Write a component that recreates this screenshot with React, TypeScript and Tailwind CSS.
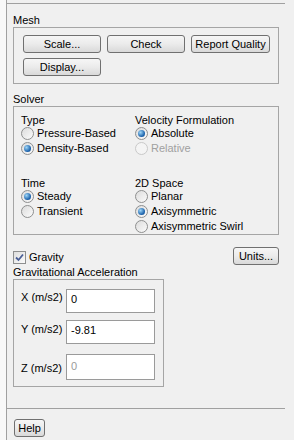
import React from 'react';

function Btn({ label, className }: { label: string; className?: string }) {
  return (
    <div
      className={
        'flex items-center justify-center rounded-[3px] border border-[#707070] bg-linear-to-b from-[#f6f6f6] via-[#ebebeb] to-[#d9d9d9] text-black ' +
        (className ?? '')
      }
    >
      {label}
    </div>
  );
}

function Radio({ label, checked, disabled }: { label: string; checked?: boolean; disabled?: boolean }) {
  return (
    <div className="flex h-[15px] items-center gap-[3px]">
      <span
        className={
          'flex h-[13px] w-[13px] items-center justify-center rounded-full border bg-linear-to-br ' +
          (disabled
            ? 'border-[#c9c9c9] from-[#f4f4f4] to-[#f4f4f4]'
            : 'border-[#8e8f8f] from-[#dcdcdc] to-[#fbfbfb]')
        }
      >
        {checked && (
          <span className="h-[7px] w-[7px] rounded-full bg-[radial-gradient(circle_at_35%_35%,#9fd6f7,#1d64ad_65%,#0c3f7a)]" />
        )}
      </span>
      <span className={disabled ? 'text-[#a0a0a0]' : ''}>{label}</span>
    </div>
  );
}

function Field({
  label,
  value,
  disabled,
  className,
  labelClass,
}: {
  label: string;
  value: string;
  disabled?: boolean;
  className?: string;
  labelClass?: string;
}) {
  return (
    <div className={'flex items-center ' + (className ?? '')}>
      <div className={'w-[45px] ' + (labelClass ?? '')}>{label}</div>
      <div
        className={
          'w-[89px] border border-[#9a9a9a] bg-white pl-[4px] ' +
          (disabled ? 'h-[26px] pt-[5px] text-[#9a9a9a]' : 'h-[24px] pt-[3px]')
        }
      >
        {value}
      </div>
    </div>
  );
}

export default function App() {
  return (
    <div className="flex h-[440px] w-[294px] bg-[#f0f0f0] font-['Liberation_Sans',Arial,sans-serif] text-[11px] leading-[13px] text-black">
      <div className="w-[6px] bg-[#f8f8f8]" />
      <div className="flex flex-1 flex-col border-l border-[#a0a0a0]">
        <div className="mr-[9px] mt-[3px] border-t border-[#a0a0a0]" />

        {/* Mesh */}
        <div className="ml-[6px] mt-[10px] h-[13px]">Mesh</div>
        <div className="ml-[6px] h-[57px] w-[266px] border border-[#a5a5a5] pl-[9px] pt-[7px]">
          <div className="flex gap-[6px]">
            <Btn label="Scale..." className="h-[18px] w-[78px]" />
            <Btn label="Check" className="h-[18px] w-[78px]" />
            <Btn label="Report Quality" className="h-[18px] w-[79px]" />
          </div>
          <div className="mt-[5px] flex">
            <Btn label="Display..." className="h-[18px] w-[78px]" />
          </div>
        </div>

        {/* Solver */}
        <div className="ml-[6px] mt-[9px] h-[13px]">Solver</div>
        <div className="ml-[6px] h-[129px] w-[266px] border border-[#a5a5a5] pl-[7px] pt-[7px]">
          <div className="grid grid-cols-[114px_1fr]">
            <div>
              <div className="h-[12px] leading-[12px]">Type</div>
              <Radio label="Pressure-Based" />
              <Radio label="Density-Based" checked />
            </div>
            <div>
              <div className="h-[12px] leading-[12px]">Velocity Formulation</div>
              <Radio label="Absolute" checked />
              <Radio label="Relative" disabled />
            </div>
          </div>
          <div className="mt-[21px] grid grid-cols-[114px_1fr]">
            <div>
              <div className="h-[12px] leading-[12px]">Time</div>
              <Radio label="Steady" checked />
              <Radio label="Transient" />
            </div>
            <div>
              <div className="h-[12px] leading-[12px]">2D Space</div>
              <Radio label="Planar" />
              <Radio label="Axisymmetric" checked />
              <Radio label="Axisymmetric Swirl" />
            </div>
          </div>
        </div>

        {/* Gravity */}
        <div className="ml-[6px] mt-[12px] flex h-[18px] w-[266px] items-center justify-between">
          <div className="flex items-center gap-[3px] pt-[2px]">
            <span className="flex h-[13px] w-[13px] items-center justify-center border border-[#8e8f8f] bg-linear-to-br from-[#dedede] to-[#fbfbfb]">
              <svg width="9" height="9" viewBox="0 0 9 9">
                <path d="M1 4.5 L3.5 7 L8 1.5" fill="none" stroke="#4a5f97" strokeWidth="1.8" />
              </svg>
            </span>
            <span>Gravity</span>
          </div>
          <Btn label="Units..." className="h-[18px] w-[46px]" />
        </div>
        <div className="ml-[6px] mt-[1px] h-[12px] leading-[12px]">Gravitational Acceleration</div>
        <div className="ml-[6px] mt-[1px] h-[108px] w-[151px] border border-[#a5a5a5] pl-[7px] pt-[9px]">
          <Field label="X (m/s2)" value="0" labelClass="pb-[8px]" />
          <Field label="Y (m/s2)" value="-9.81" className="mt-[7px]" labelClass="pb-[5px]" />
          <Field label="Z (m/s2)" value="0" disabled className="mt-[10px]" labelClass="pt-[3px]" />
        </div>

        <div className="mr-[9px] mt-[21px] border-t border-[#a0a0a0]" />
        <div className="ml-[7px] mt-[10px] flex">
          <Btn label="Help" className="h-[18px] w-[31px]" />
        </div>
      </div>
    </div>
  );
}
